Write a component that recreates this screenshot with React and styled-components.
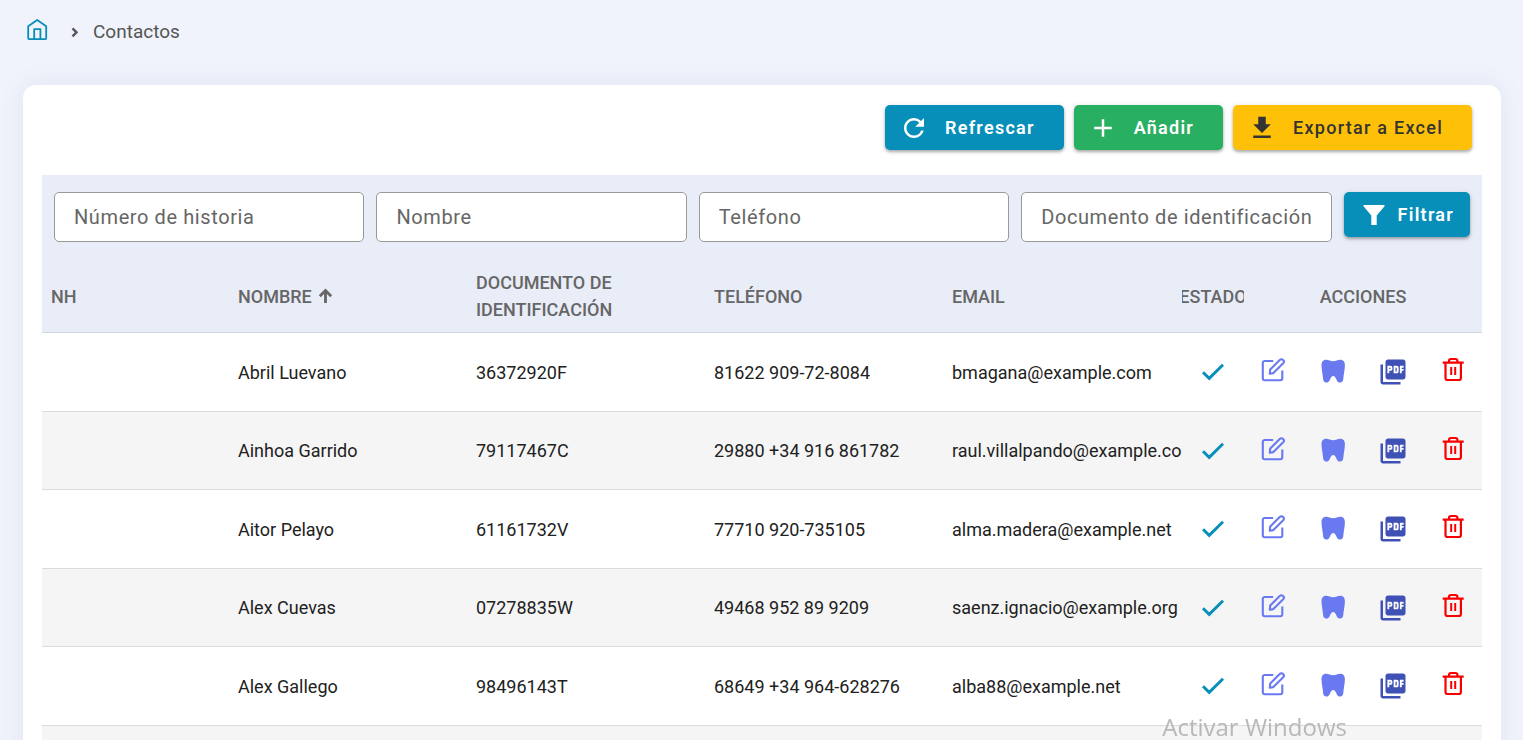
import React from "react";
import styled, { createGlobalStyle } from "styled-components";
import { MdAdd, MdFileDownload, MdPictureAsPdf, MdRefresh } from "react-icons/md";

const GlobalStyle = createGlobalStyle`
  * {
    box-sizing: border-box;
  }

  body {
    margin: 0;
    background-color: #f0f3fb;
    font-family: Roboto, sans-serif;
    color: #212121;
  }
`;

const Page = styled.div`
  height: 100vh;
  overflow: hidden;
  padding: 0 22px 0 23px;
`;

const Breadcrumb = styled.nav`
  height: 85px;
  padding: 18px 4px;
  display: flex;
  align-items: flex-start;
  color: #555;
  font-size: 19px;
  line-height: 28px;
`;

const HomeLink = styled.a`
  height: 24px;
  color: #078fba;
`;

const Separator = styled.svg`
  width: 8px;
  height: 28px;
  margin: 0 14px 0 23px;
`;

const Card = styled.main`
  background-color: #fff;
  border-radius: 13px;
  padding: 20px 19px;
  box-shadow: 0 0 24px rgba(90, 110, 190, 0.1);
`;

const Toolbar = styled.div`
  display: flex;
  justify-content: flex-end;
  gap: 10px;
  padding: 0 10px 25px;
`;

const Button = styled.button`
  height: 45px;
  flex-shrink: 0;
  display: flex;
  align-items: center;
  gap: ${(props) => (props.$compact ? "12px" : "16px")};
  padding: ${(props) => (props.$compact ? "0 16px 0 18px" : "0 29px 0 14px")};
  border: none;
  border-radius: 5px;
  background-color: ${(props) => props.$background};
  color: ${(props) => props.$color || "#fff"};
  font-family: inherit;
  font-size: 18px;
  font-weight: ${(props) => (props.$color ? 500 : 600)};
  letter-spacing: 0.07em;
  cursor: pointer;
  box-shadow: 0 2px 3px rgba(0, 0, 0, 0.28), 0 1px 6px rgba(0, 0, 0, 0.1);
`;

const Filters = styled.form`
  display: flex;
  align-items: flex-start;
  gap: 12px;
  padding: 17px 12px 18px;
  background-color: #e9edf8;
`;

const FilterInput = styled.input`
  flex: 1;
  min-width: 0;
  height: 50px;
  padding: 0 19px;
  border: 1px solid #999;
  border-radius: 5px;
  background-color: #fff;
  font-family: inherit;
  font-size: 20px;
  letter-spacing: 0.03em;

  &::placeholder {
    color: #666;
    opacity: 1;
  }
`;

const Table = styled.table`
  width: 100%;
  table-layout: fixed;
  border-collapse: separate;
  border-spacing: 0;
  font-size: 18px;
`;

const HeadCell = styled.th`
  width: ${(props) => props.$width || "auto"};
  height: 73px;
  padding: 0 0 0 ${(props) => (props.$first ? "9px" : "0")};
  border-bottom: 1px solid #cfd2df;
  background-color: #e9edf8;
  color: #666;
  font-weight: 500;
  line-height: 27px;
  text-align: ${(props) => props.$align || "left"};
`;

const HeadLabel = styled.div`
  display: flex;
  align-items: center;
  justify-content: ${(props) => (props.$center ? "center" : "flex-start")};
  gap: 6px;
  overflow: hidden;
`;

const Row = styled.tr`
  height: 79px;

  &:nth-child(even) {
    height: 78px;
    background-color: #f5f5f5;
  }
`;

const Cell = styled.td`
  padding: 0;
  border-bottom: 1px solid #dcdcdc;
  overflow: hidden;
  white-space: nowrap;
`;

const IconGroup = styled.div`
  display: flex;
  justify-content: space-around;
  align-items: center;
  color: ${(props) => props.color};
`;

const IconButton = styled.button`
  width: 30px;
  height: 30px;
  padding: 0;
  border: none;
  background: none;
  color: ${(props) => props.color};
  cursor: pointer;

  svg {
    display: block;
  }
`;

const Watermark = styled.div`
  position: fixed;
  right: 176px;
  bottom: -3px;
  color: #b8b8b8;
  font-family: "Open Sans", sans-serif;
  font-size: 24px;
  line-height: 32px;
  pointer-events: none;
`;

const HomeIcon = () => (
  <svg width="21" height="24" viewBox="0 0 21 24" fill="none" stroke="currentColor" strokeWidth="1.8">
    <path d="M1.2 8.3 10.2 2l9 6.3v11.6a1.3 1.3 0 0 1-1.3 1.3H2.5a1.3 1.3 0 0 1-1.3-1.3z" strokeLinejoin="round" />
    <path d="M7.2 21.2v-10.1h6.2v10.1" strokeLinejoin="round" />
  </svg>
);

const SortIcon = () => (
  <svg width="15" height="16" viewBox="0 0 15 16" fill="none" stroke="currentColor" strokeWidth="2.8">
    <path d="M7.5 15V3M1.8 8.2l5.7-5.7 5.700 5.7" />
  </svg>
);

const FilterIcon = () => (
  <svg width="24" height="24" viewBox="0 0 24 24" fill="currentColor">
    <path d="M1.5 2h21v1.3L14.7 12.5V22H9.3V12.5L1.5 3.3z" />
  </svg>
);

const CheckIcon = () => (
  <svg width="30" height="30" viewBox="0 0 30 30" fill="none" stroke="currentColor" strokeWidth="2.9">
    <path d="m5 15.200 6.200 6.200L25 7.800" />
  </svg>
);

const EditIcon = () => (
  <svg width="30" height="30" viewBox="0 0 30 30" fill="none" stroke="currentColor" strokeWidth="2.1" strokeLinejoin="round">
    <path d="M14.2 4H5.8a2 2 0 0 0-2 2v15.3a2 2 0 0 0 2 2h15.5a2 2 0 0 0 2-2V13.5" />
    <path d="m10.8 16.800.4-4.200L20.700 3a2.200 2.200 0 0 1 3.500 3.300L14.400 16.100z" />
  </svg>
);

const ToothIcon = () => (
  <svg width="30" height="30" viewBox="0 0 30 30" fill="currentColor">
    <path d="M8 2.700c2.800 0 4.500 1.500 7.200 1.500s4.400-1.500 7.200-1.500c3 0 4.600 2.200 4.500 5.800-.2 5-1.300 9.300-1.600 13.500-.2 2.300-1.200 3.500-3.200 3.500-2 0-2.900-1.100-3.700-3.100-.6-1.600-1.600-3.500-3.200-3.500s-2.600 1.900-3.200 3.500c-.8 2-1.700 3.100-3.700 3.100s-3-1.200-3.200-3.500C4.800 17.800 3.700 13.500 3.500 8.500 3.400 4.900 5 2.700 8 2.700z" />
  </svg>
);

const TrashIcon = () => (
  <svg width="30" height="30" viewBox="0 0 30 30" fill="none" stroke="currentColor" strokeWidth="2.2">
    <path d="M5.7 5.7h21M8.5 5.7v15.3a2 2 0 0 0 2 2h11.4a2 2 0 0 0 2-2V5.7M12 5.5V4a2 2 0 0 1 2-2h4.4a2 2 0 0 1 2 2v1.5" />
    <path d="M14.2 10v8M18.2 10v8" strokeWidth="2" />
  </svg>
);

const filters = [
  "Número de historia",
  "Nombre",
  "Teléfono",
  "Documento de identificación",
];

const contacts = [
  {
    name: "Abril Luevano",
    document: "36372920F",
    phone: "81622 909-72-8084",
    email: "bmagana@example.com",
  },
  {
    name: "Ainhoa Garrido",
    document: "79117467C",
    phone: "29880 +34 916 861782",
    email: "raul.villalpando@example.com",
  },
  {
    name: "Aitor Pelayo",
    document: "61161732V",
    phone: "77710 920-735105",
    email: "alma.madera@example.net",
  },
  {
    name: "Alex Cuevas",
    document: "07278835W",
    phone: "49468 952 89 9209",
    email: "saenz.ignacio@example.org",
  },
  {
    name: "Alex Gallego",
    document: "98496143T",
    phone: "68649 +34 964-628276",
    email: "alba88@example.net",
  },
];

const ContactRow = ({ contact }) => (
  <Row>
    <Cell />
    <Cell>{contact.name}</Cell>
    <Cell>{contact.document}</Cell>
    <Cell>{contact.phone}</Cell>
    <Cell>{contact.email}</Cell>
    <Cell>
      <IconGroup color="#078fba">
        <CheckIcon />
      </IconGroup>
    </Cell>
    <Cell>
      <IconGroup>
        <IconButton color="#6979f0" aria-label="Editar">
          <EditIcon />
        </IconButton>
        <IconButton color="#6979f0" aria-label="Odontograma">
          <ToothIcon />
        </IconButton>
        <IconButton color="#3f51b5" aria-label="PDF">
          <MdPictureAsPdf size={30} />
        </IconButton>
        <IconButton color="#f90000" aria-label="Eliminar">
          <TrashIcon />
        </IconButton>
      </IconGroup>
    </Cell>
  </Row>
);

const App = () => {
  return (
    <Page>
      <GlobalStyle />
      <Breadcrumb>
        <HomeLink href="#" aria-label="Inicio">
          <HomeIcon />
        </HomeLink>
        <Separator viewBox="0 0 8 28" fill="none" stroke="currentColor" strokeWidth="2.4">
          <path d="m1.5 10.3 4 4-4 4" />
        </Separator>
        <span>Contactos</span>
      </Breadcrumb>
      <Card>
        <Toolbar>
          <Button $background="#078fba">
            <MdRefresh size={30} />
            Refrescar
          </Button>
          <Button $background="#29af61">
            <MdAdd size={30} />
            Añadir
          </Button>
          <Button $background="#ffc107" $color="#333">
            <MdFileDownload size={30} />
            Exportar a Excel
          </Button>
        </Toolbar>
        <Filters onSubmit={(e) => e.preventDefault()}>
          {filters.map((label) => (
            <FilterInput key={label} placeholder={label} aria-label={label} />
          ))}
          <Button $background="#078fba" $compact>
            <FilterIcon />
            Filtrar
          </Button>
        </Filters>
        <Table>
          <thead>
            <tr>
              <HeadCell $width="196px" $first>NH</HeadCell>
              <HeadCell>
                <HeadLabel>
                  NOMBRE
                  <SortIcon />
                </HeadLabel>
              </HeadCell>
              <HeadCell>
                DOCUMENTO DE
                <br />
                IDENTIFICACIÓN
              </HeadCell>
              <HeadCell>TELÉFONO</HeadCell>
              <HeadCell $width="230px">EMAIL</HeadCell>
              <HeadCell $width="62px">
                <HeadLabel $center>ESTADO</HeadLabel>
              </HeadCell>
              <HeadCell $width="238px" $align="center">ACCIONES</HeadCell>
            </tr>
          </thead>
          <tbody>
            {contacts.map((contact) => (
              <ContactRow key={contact.document} contact={contact} />
            ))}
            <Row>
              <Cell colSpan={7} />
            </Row>
          </tbody>
        </Table>
      </Card>
      <Watermark>Activar Windows</Watermark>
    </Page>
  );
};

export default App;
